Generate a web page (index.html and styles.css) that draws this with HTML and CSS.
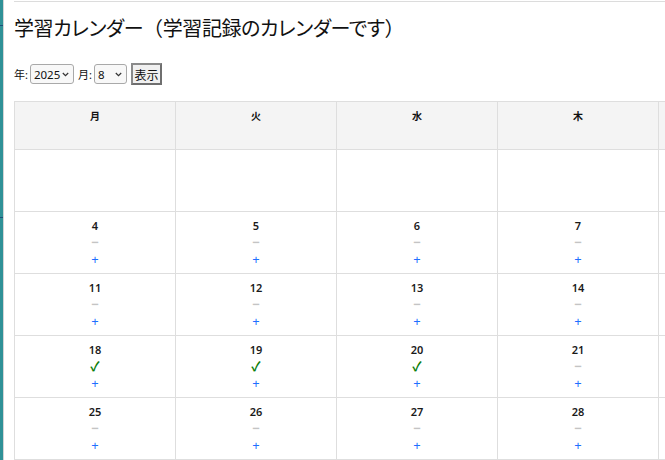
FILE: index.html
```html
<!DOCTYPE html>
<html lang="ja">
<head>
<meta charset="utf-8">
<link rel="stylesheet" href="styles.css">
</head>
<body>
<div class="frame">
  <div class="rail"><span class="tick t1"></span><span class="tick t2"></span></div>
  <main class="main">
    <h1 class="title">学習カレンダー<span class="paren">（</span>学習記録のカレンダーです<span class="paren">）</span></h1>
    <form class="controls">
      <label class="lbl">年:</label>
      <span class="selwrap sw-year">
        <select class="sel"><option>2025</option></select>
        <svg class="chev" width="7" height="5" viewBox="0 0 7 5"><path d="M0.8 1 L3.5 3.7 L6.2 1" fill="none" stroke="#333" stroke-width="1.2"/></svg>
      </span>
      <label class="lbl">月:</label>
      <span class="selwrap sw-month">
        <select class="sel"><option>8</option></select>
        <svg class="chev" width="7" height="5" viewBox="0 0 7 5"><path d="M0.8 1 L3.5 3.7 L6.2 1" fill="none" stroke="#333" stroke-width="1.2"/></svg>
      </span>
      <button type="button" class="btn">表示</button>
    </form>
    <table class="cal">
      <colgroup><col><col><col><col><col><col><col></colgroup>
      <thead>
        <tr><th>月</th><th>火</th><th>水</th><th>木</th><th>金</th><th>土</th><th>日</th></tr>
      </thead>
      <tbody>
        <tr>
          <td></td><td></td><td></td><td></td>
          <td><div class="day">1</div><div class="none">−</div><a class="add">+</a></td>
          <td><div class="day">2</div><div class="none">−</div><a class="add">+</a></td>
          <td><div class="day">3</div><div class="none">−</div><a class="add">+</a></td>
        </tr>
        <tr>
          <td><div class="day">4</div><div class="none">−</div><a class="add">+</a></td>
          <td><div class="day">5</div><div class="none">−</div><a class="add">+</a></td>
          <td><div class="day">6</div><div class="none">−</div><a class="add">+</a></td>
          <td><div class="day">7</div><div class="none">−</div><a class="add">+</a></td>
          <td><div class="day">8</div><div class="none">−</div><a class="add">+</a></td>
          <td><div class="day">9</div><div class="none">−</div><a class="add">+</a></td>
          <td><div class="day">10</div><div class="none">−</div><a class="add">+</a></td>
        </tr>
        <tr>
          <td><div class="day">11</div><div class="none">−</div><a class="add">+</a></td>
          <td><div class="day">12</div><div class="none">−</div><a class="add">+</a></td>
          <td><div class="day">13</div><div class="none">−</div><a class="add">+</a></td>
          <td><div class="day">14</div><div class="none">−</div><a class="add">+</a></td>
          <td><div class="day">15</div><div class="none">−</div><a class="add">+</a></td>
          <td><div class="day">16</div><div class="none">−</div><a class="add">+</a></td>
          <td><div class="day">17</div><div class="none">−</div><a class="add">+</a></td>
        </tr>
        <tr>
          <td><div class="day">18</div><div class="done">✓</div><a class="add">+</a></td>
          <td><div class="day">19</div><div class="done">✓</div><a class="add">+</a></td>
          <td><div class="day">20</div><div class="done">✓</div><a class="add">+</a></td>
          <td><div class="day">21</div><div class="none">−</div><a class="add">+</a></td>
          <td><div class="day">22</div><div class="none">−</div><a class="add">+</a></td>
          <td><div class="day">23</div><div class="none">−</div><a class="add">+</a></td>
          <td><div class="day">24</div><div class="none">−</div><a class="add">+</a></td>
        </tr>
        <tr>
          <td><div class="day">25</div><div class="none">−</div><a class="add">+</a></td>
          <td><div class="day">26</div><div class="none">−</div><a class="add">+</a></td>
          <td><div class="day">27</div><div class="none">−</div><a class="add">+</a></td>
          <td><div class="day">28</div><div class="none">−</div><a class="add">+</a></td>
          <td><div class="day">29</div><div class="none">−</div><a class="add">+</a></td>
          <td><div class="day">30</div><div class="none">−</div><a class="add">+</a></td>
          <td><div class="day">31</div><div class="none">−</div><a class="add">+</a></td>
        </tr>
      </tbody>
    </table>
  </main>
</div>
</body>
</html>
```
FILE: styles.css
```css
html, body {
  margin: 0;
  padding: 0;
  background: #fff;
  overflow: hidden;
}
body {
  font-family: "Noto Sans", "Noto Sans CJK JP", sans-serif;
  color: #111;
  width: 665px;
  height: 460px;
}
.frame {
  display: flex;
  height: 460px;
}
.rail {
  position: relative;
  flex: 0 0 3px;
  background: #2f9197;
  border-right: 1px solid #d4d4d4;
}
.tick {
  position: absolute;
  left: 0;
  width: 3px;
  height: 1px;
  background: #1b4f7a;
}
.t1 { top: 25px; }
.t2 { top: 217px; }
.main {
  flex: 1;
  margin-top: 1px;
  margin-left: 10px;
  border-top: 1px solid #dcdcdc;
  overflow: hidden;
}
.title {
  margin: 12px 0 0;
  font-family: "Noto Sans CJK JP", sans-serif;
  font-feature-settings: "palt";
  font-size: 20px;
  letter-spacing: -0.4px;
  font-weight: 400;
  line-height: 28px;
  color: #111;
  white-space: nowrap;
}
.paren {
  font-feature-settings: normal;
}
.controls {
  display: flex;
  align-items: center;
  margin-top: 21px;
  height: 22px;
  font-size: 11px;
  font-family: "Noto Sans", "Noto Sans CJK JP", sans-serif;
}
.lbl { margin-right: 2px; }
.selwrap {
  position: relative;
  display: inline-block;
  height: 20px;
  margin-right: 4px;
}
.sw-year { width: 44px; }
.sw-month { width: 33px; }
.sel {
  appearance: none;
  -webkit-appearance: none;
  box-sizing: border-box;
  width: 100%;
  height: 20px;
  font-size: 11.5px;
  font-family: "Noto Sans", sans-serif;
  border: 1px solid #a9a9a9;
  border-radius: 3px;
  background: #f8f8f8;
  color: #111;
  padding: 0 0 0 3px;
  margin: 0;
}
.chev {
  position: absolute;
  right: 5px;
  top: 8px;
  pointer-events: none;
}
.btn {
  box-sizing: border-box;
  height: 22px;
  width: 31px;
  padding: 0;
  font-size: 12px;
  font-family: "Noto Sans CJK JP", sans-serif;
  background: #f0f0f0;
  border: 2px solid #6f6f6f;
  border-top-color: #8a8a8a;
  border-left-color: #8a8a8a;
  color: #111;
}
.cal {
  margin-top: 16px;
  border-collapse: collapse;
  table-layout: fixed;
  width: 1127px;
}
.cal col {
  width: 161px;
}
.cal th, .cal td {
  border: 1px solid #dedede;
  vertical-align: top;
  text-align: center;
  padding: 7px 4px 0;
}
.cal th {
  height: 40px;
  background: #f4f4f4;
  font-family: "Noto Sans CJK JP", sans-serif;
  font-size: 10px;
  font-weight: 700;
  line-height: 14px;
}
.cal td {
  height: 55px;
  padding-top: 6px;
  font-size: 11px;
  line-height: 16px;
}
.day {
  font-weight: 600;
  color: #1a1a1a;
}
.none {
  color: #c4c4c4;
  font-weight: 700;
  font-size: 13px;
}
.done {
  color: #0a7d0a;
  font-weight: 700;
  font-size: 13px;
}
.add {
  display: block;
  color: #1f6fff;
  font-size: 13px;
  line-height: 18px;
}
```
